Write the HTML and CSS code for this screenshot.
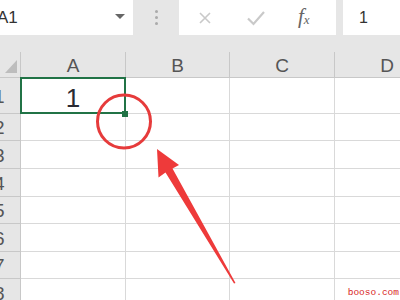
FILE: index.html
```html
<!DOCTYPE html>
<html lang="zh">
<head>
    <meta charset="UTF-8">
    <title>Excel 填充柄</title>
    <link rel="stylesheet" href="styles.css">
</head>
<body>
    <div class="app">
        <!-- 名称框 + 编辑栏 -->
        <div class="topbar">
            <div class="namebox">
                <span class="ref">A1</span>
                <span class="caret"></span>
            </div>
            <div class="dots"><i></i><i></i><i></i></div>
            <div class="fbuttons">
                <svg class="ico" width="14" height="14" viewBox="0 0 14 14">
                    <path d="M2 2 L12 12 M12 2 L2 12" stroke="#c9c9c9" stroke-width="1.6" fill="none"/>
                </svg>
                <svg class="ico" width="20" height="16" viewBox="0 0 20 16">
                    <path d="M2 8.5 L7.5 14 L18 2" stroke="#c9c9c9" stroke-width="2.2" fill="none"/>
                </svg>
                <span class="fx">f<sub>x</sub></span>
            </div>
            <div class="fvalue">1</div>
        </div>

        <div class="strip"></div>

        <!-- 表格 -->
        <div class="sheet">
            <div class="corner"><span class="tri"></span></div>
            <div class="colhead">A</div>
            <div class="colhead">B</div>
            <div class="colhead">C</div>
            <div class="colhead">D</div>

            <div class="rowhead">1</div>
            <div class="cell sel"><span class="val">1</span></div>
            <div class="cell"></div><div class="cell"></div><div class="cell"></div>

            <div class="rowhead">2</div>
            <div class="cell"></div><div class="cell"></div><div class="cell"></div><div class="cell"></div>
            <div class="rowhead">3</div>
            <div class="cell"></div><div class="cell"></div><div class="cell"></div><div class="cell"></div>
            <div class="rowhead">4</div>
            <div class="cell"></div><div class="cell"></div><div class="cell"></div><div class="cell"></div>
            <div class="rowhead">5</div>
            <div class="cell"></div><div class="cell"></div><div class="cell"></div><div class="cell"></div>
            <div class="rowhead">6</div>
            <div class="cell"></div><div class="cell"></div><div class="cell"></div><div class="cell"></div>
            <div class="rowhead">7</div>
            <div class="cell"></div><div class="cell"></div><div class="cell"></div><div class="cell"></div>
            <div class="rowhead">8</div>
            <div class="cell"></div><div class="cell"></div><div class="cell"></div><div class="cell"></div>
        </div>

        <!-- 红色标注 -->
        <svg class="marks" width="400" height="300" viewBox="0 0 400 300">
            <circle cx="124" cy="121.5" r="26.5" fill="none" stroke="#e63b3b" stroke-width="3"/>
            <polygon points="157,149 179,165 172.5,168.5 235.5,283 234,283.5 165.5,172.5 158.5,177.5" fill="#ee3a3a"/>
        </svg>

        <div class="watermark">booso.com</div>
    </div>
</body>
</html>
```

FILE: styles.css
```css
body {
    margin: 0;
    background: #fff;
    font-family: 'Liberation Sans', Arial, sans-serif;
}
.app {
    position: relative;
    width: 400px;
    height: 300px;
    overflow: hidden;
}
.topbar {
    display: flex;
    height: 35px;
    background: #e6e6e6;
}
.namebox {
    width: 133px;
    background: #fff;
    display: flex;
    align-items: center;
    justify-content: space-between;
    padding-right: 8px;
    box-sizing: border-box;
}
.ref {
    font-size: 17px;
    color: #333;
    text-indent: -3px;
}
.caret {
    width: 0;
    height: 0;
    border-left: 5px solid transparent;
    border-right: 5px solid transparent;
    border-top: 5px solid #666;
    margin-top: -2px;
}
.dots {
    width: 46px;
    display: flex;
    flex-direction: column;
    align-items: center;
    justify-content: center;
    gap: 3px;
}
.dots i {
    width: 3px;
    height: 3px;
    border-radius: 50%;
    background: #aaa;
}
.fbuttons {
    width: 157px;
    background: #fff;
    display: flex;
    align-items: center;
    box-sizing: border-box;
    padding-left: 19px;
}
.fbuttons .ico:nth-child(2) {
    margin-left: 34px;
}
.fx {
    margin-left: 32px;
    font-family: 'Liberation Serif', 'Times New Roman', serif;
    font-style: italic;
    font-size: 21px;
    color: #666;
    margin-top: -2px;
}
.fx sub {
    font-size: 13px;
    vertical-align: -1px;
}
.fvalue {
    flex: 1;
    margin-left: 7px;
    background: #fff;
    font-size: 16px;
    color: #333;
    display: flex;
    align-items: center;
    padding-left: 16px;
}
.strip {
    height: 17px;
    background: #e6e6e6;
}
.sheet {
    display: grid;
    grid-template-columns: 21px 105px 104px 105px 105px;
    grid-template-rows: 26px 36px 27px 28px 28px 27px 28px 27px 28px;
}
.corner, .colhead, .rowhead, .cell {
    box-sizing: border-box;
    border-right: 1px solid #d9d9d9;
    border-bottom: 1px solid #d9d9d9;
}
.corner, .colhead, .rowhead {
    background: #e6e6e6;
    border-color: #c8c8c8;
    color: #555;
    font-size: 19px;
}
.corner {
    display: flex;
    align-items: flex-end;
    justify-content: flex-end;
    padding: 0 3px 4px 0;
}
.tri {
    width: 0;
    height: 0;
    border-left: 12px solid transparent;
    border-bottom: 13px solid #bdbdbd;
}
.colhead {
    display: flex;
    align-items: center;
    justify-content: center;
    padding-top: 3px;
}
.rowhead {
    display: flex;
    align-items: center;
    text-indent: -6px;
    padding-top: 2px;
}
.cell {
    background: #fff;
}
.sel {
    position: relative;
    display: flex;
    align-items: flex-end;
    justify-content: center;
}
.sel::after {
    content: '';
    position: absolute;
    top: -1px;
    left: -1px;
    right: -1px;
    bottom: -1px;
    border: 2px solid #217346;
}
.sel::before {
    content: '';
    position: absolute;
    right: -3px;
    bottom: -4px;
    width: 6px;
    height: 6px;
    background: #217346;
    z-index: 1;
}
.val {
    font-size: 26px;
    line-height: 26px;
    color: #2a2a33;
    padding-bottom: 2px;
}
.marks {
    position: absolute;
    top: 0;
    left: 0;
    pointer-events: none;
}
.watermark {
    position: absolute;
    right: 1px;
    top: 287px;
    font-family: 'Liberation Mono', 'Courier New', monospace;
    font-size: 9.5px;
    color: #d81e1e;
    white-space: nowrap;
}
```
